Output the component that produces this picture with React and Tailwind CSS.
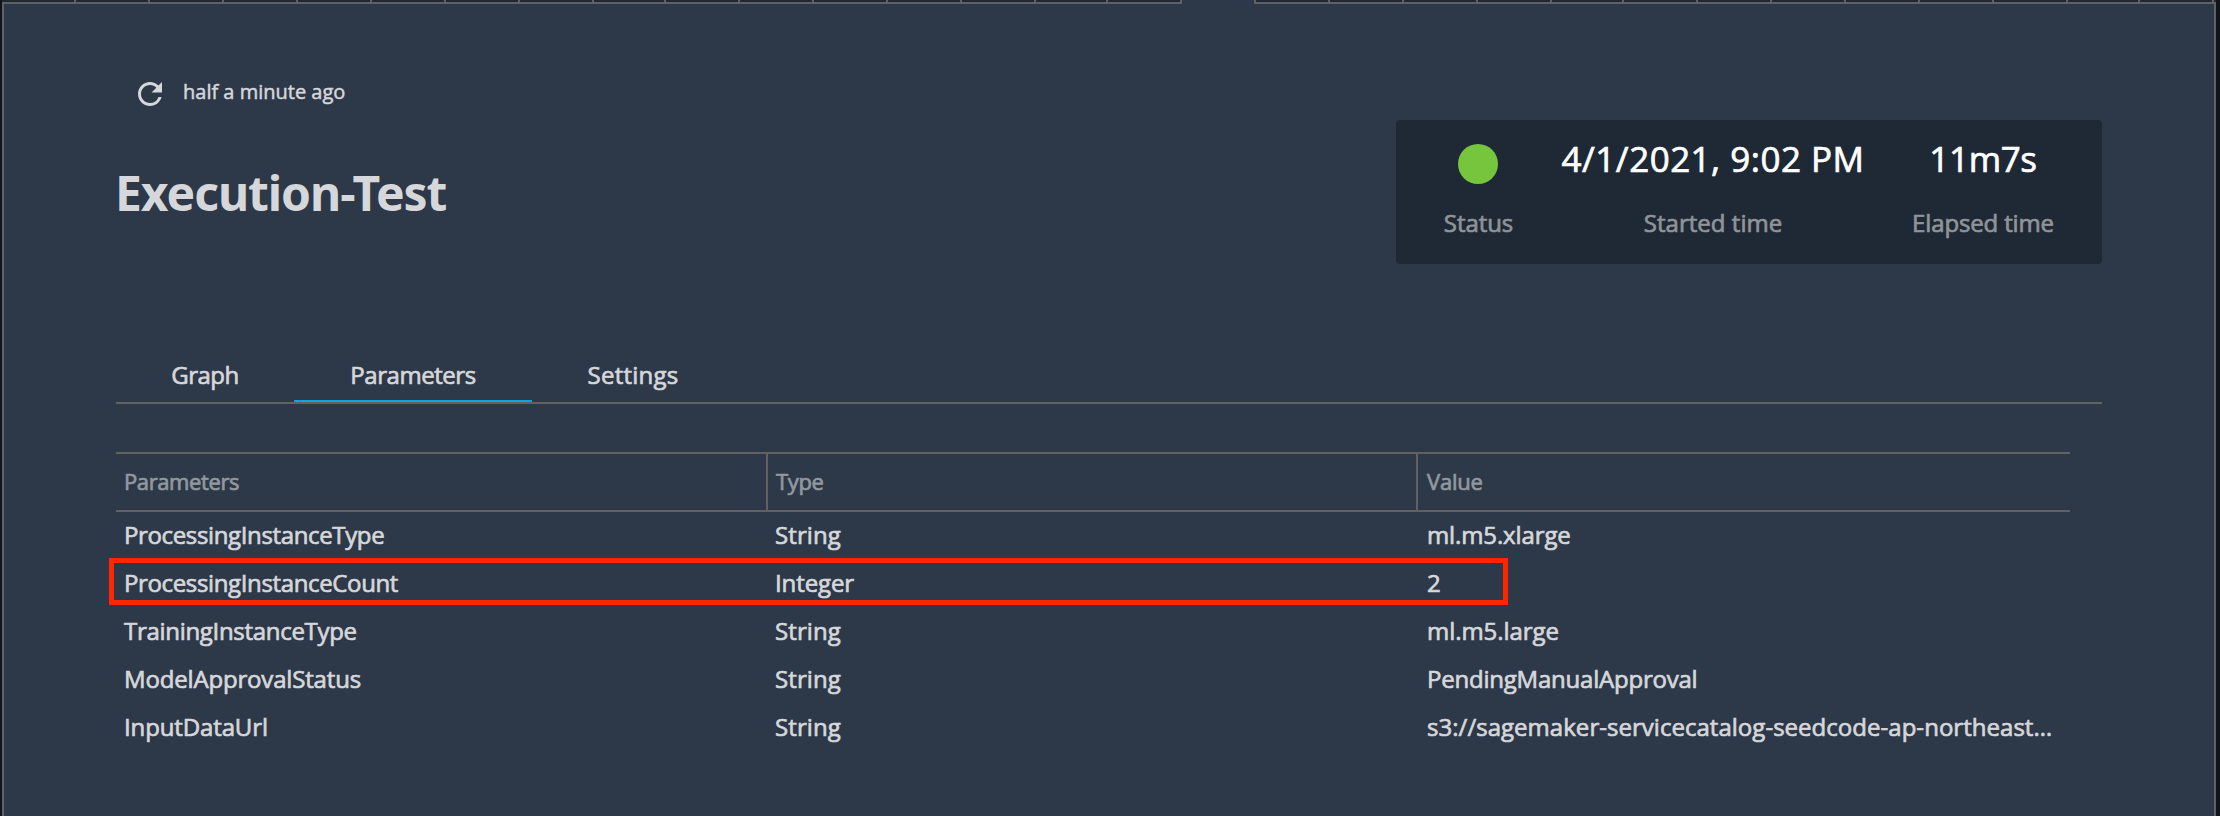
import React from "react";
import { MdRefresh } from "react-icons/md";

const LEFT_CELLS = [
  "w-[74px]", "w-[74px]", "w-[74px]", "w-[74px]", "w-[74px]", "w-[74px]", "w-[74px]", "w-[74px]",
  "w-[72px]", "w-[74px]", "w-[74px]", "w-[74px]", "w-[74px]", "w-[74px]", "w-[72px]", "w-[74px]",
];
const RIGHT_CELLS = [
  "w-[74px]", "w-[74px]", "w-[74px]", "w-[74px]", "w-[72px]", "w-[74px]", "w-[74px]",
  "w-[74px]", "w-[74px]", "w-[74px]", "w-[74px]", "w-[72px]", "w-[74px]",
];

const TABS = [
  { label: "Graph", width: "w-[178px]", tracking: "tracking-[-0.5px]" },
  { label: "Parameters", width: "w-[238px]", tracking: "tracking-[-0.45px]", active: true },
  { label: "Settings", width: "w-[202px]", tracking: "tracking-[0.25px]" },
];

const COLUMNS = [
  { label: "Parameters", width: "w-[652px] border-r-2 pl-2", tracking: "tracking-[-0.4px]" },
  { label: "Type", width: "w-[650px] border-r-2 pl-2", tracking: "tracking-[-0.37px]" },
  { label: "Value", width: "w-[652px] pl-[9px]", tracking: "tracking-[-0.22px]" },
];

const ROWS = [
  {
    name: ["ProcessingInstanceType", "tracking-[-0.36px]"],
    type: ["String", "tracking-[0.1px]"],
    value: ["ml.m5.xlarge", "tracking-[-0.12px]"],
  },
  {
    name: ["ProcessingInstanceCount", "tracking-[-0.36px]"],
    type: ["Integer", "tracking-[-0.1px]"],
    value: ["2", "tracking-[0px]"],
    highlighted: true,
  },
  {
    name: ["TrainingInstanceType", "tracking-[-0.3px]"],
    type: ["String", "tracking-[0.1px]"],
    value: ["ml.m5.large", "tracking-[-0.05px]"],
  },
  {
    name: ["ModelApprovalStatus", "tracking-[-0.17px]"],
    type: ["String", "tracking-[0.1px]"],
    value: ["PendingManualApproval", "tracking-[-0.22px]"],
  },
  {
    name: ["InputDataUrl", "tracking-[-0.13px]"],
    type: ["String", "tracking-[0.1px]"],
    value: ["s3://sagemaker-servicecatalog-seedcode-ap-northeast…", "tracking-[0.03px]"],
  },
];

function TopStrip() {
  return (
    <div className="flex h-1 justify-between">
      <div className="flex w-[1180px] border-b-2 border-[#616161] bg-[#1f2935]">
        {LEFT_CELLS.map((w, i) => (
          <div key={i} className={`${w} shrink-0 border-r-2 border-[#616161]`} />
        ))}
      </div>
      <div className="flex w-[962px] border-b-2 border-l-2 border-[#616161] bg-[#1f2935]">
        {RIGHT_CELLS.map((w, i) => (
          <div key={i} className={`${w} shrink-0 border-r-2 border-[#616161]`} />
        ))}
      </div>
    </div>
  );
}

function StatusCard() {
  return (
    <div className="mt-[46px] flex h-36 w-[706px] rounded bg-[#1f2935] text-center text-2xl/8 text-[#8f9499]">
      <div className="flex w-[164px] flex-col items-center gap-[23px] pt-6">
        <div className="size-10 rounded-full bg-[#77c53d]" />
        <div className="pl-px tracking-[-0.06px]">Status</div>
      </div>
      <div className="flex w-[305px] flex-col gap-6 pt-[15px] pl-px">
        <div className="text-[35px]/[48px] tracking-[0.48px] whitespace-nowrap text-white">4/1/2021, 9:02 PM</div>
        <div className="tracking-[0.03px]">Started time</div>
      </div>
      <div className="flex w-[236px] flex-col gap-6 pt-[15px]">
        <div className="text-[35px]/[48px] tracking-[-0.36px] text-white">11m7s</div>
        <div className="tracking-[-0.15px]">Elapsed time</div>
      </div>
    </div>
  );
}

function Tabs() {
  return (
    <div className="flex border-b-2 border-[#616161] text-2xl/8">
      {TABS.map((t) => (
        <div
          key={t.label}
          className={`${t.width} ${t.tracking} border-b-2 pb-[9px] text-center ${
            t.active ? "border-[#00a9e0]" : "border-transparent"
          }`}
        >
          {t.label}
        </div>
      ))}
    </div>
  );
}

function Table() {
  return (
    <div className="mt-12 w-[1954px]">
      <div className="flex h-[60px] border-y-2 border-[#616161] text-[22px]/[54px] text-[#92989f]">
        {COLUMNS.map((c) => (
          <div key={c.label} className={`${c.width} ${c.tracking} border-[#616161]`}>
            {c.label}
          </div>
        ))}
      </div>
      {ROWS.map((r) => (
        <div key={r.name[0]} className="relative flex h-12 text-2xl/[46px] whitespace-nowrap">
          <div className={`w-[652px] pl-2 ${r.name[1]}`}>{r.name[0]}</div>
          <div className={`w-[650px] pl-[7px] ${r.type[1]}`}>{r.type[0]}</div>
          <div className={`w-[652px] pl-[9px] ${r.value[1]}`}>{r.value[0]}</div>
          {r.highlighted && (
            <div className="absolute top-[-2px] left-[-7px] h-[47px] w-[1399px] border-5 border-[#ff2600]" />
          )}
        </div>
      ))}
    </div>
  );
}

export default function App() {
  return (
    <div className="h-[816px] w-[2220px] overflow-hidden bg-[#10151c] pr-1 font-['Open_Sans',sans-serif] font-medium text-[#d5d7da] [-webkit-text-stroke:0.7px_currentColor]">
      <div className="ml-0.5 flex h-full flex-col border-x-2 border-[#616161] bg-[#2d3848]">
        <div className="-mx-0.5">
          <TopStrip />
        </div>
        <div className="px-28">
          <div className="flex h-[355px] justify-between pt-[70px]">
            <div>
              <div className="flex h-9 items-start gap-[15px] pl-4 text-xl/9">
                <MdRefresh className="mt-0.5 size-9" />
                <span className="[-webkit-text-stroke:0.5px_currentColor]">half a minute ago</span>
              </div>
              <h1 className="-ml-px mt-[51px] font-['Noto_Sans',sans-serif] text-5xl/[64px] font-bold tracking-[-1.05px] [-webkit-text-stroke:0px]">
                Execution-Test
              </h1>
            </div>
            <StatusCard />
          </div>
          <div className="w-[1986px]">
            <Tabs />
            <Table />
          </div>
        </div>
      </div>
    </div>
  );
}
